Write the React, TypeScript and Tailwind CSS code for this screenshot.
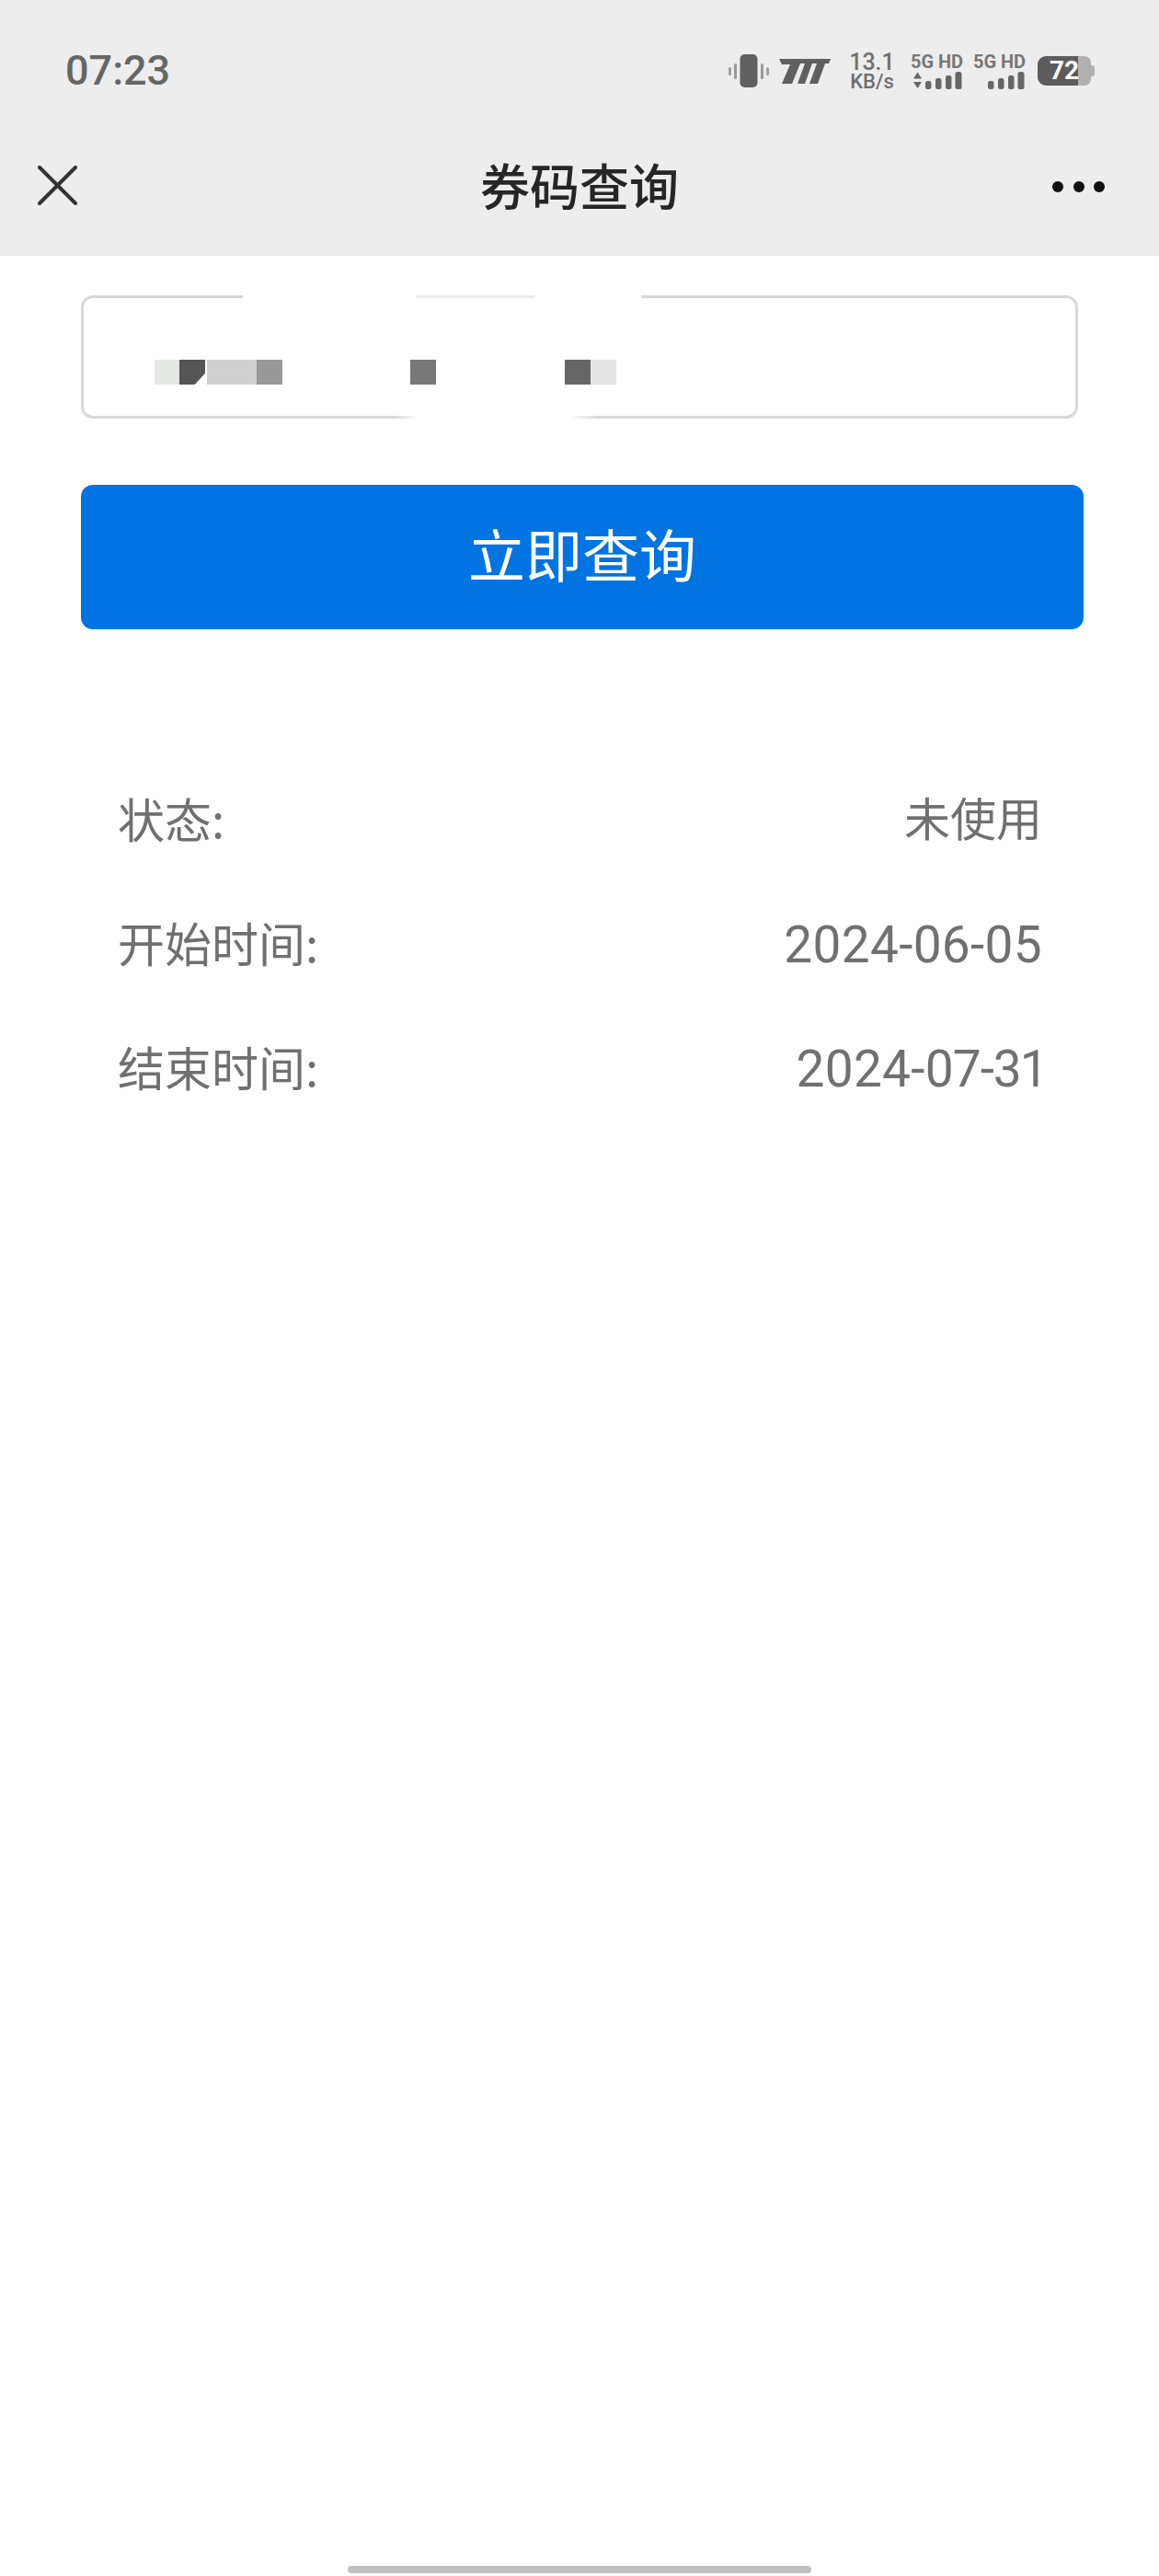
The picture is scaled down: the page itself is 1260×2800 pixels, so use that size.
import type { ReactNode } from "react";

const cjk = { fontFamily: '"Noto Sans CJK SC", "Noto Sans", sans-serif' };
const latin = { fontFamily: 'Roboto, "Noto Sans CJK SC", sans-serif' };

function Vibrate() {
  return (
    <svg width="44" height="36" viewBox="0 0 44 36" className="shrink-0" fill="#606060">
      <rect x="12.5" y="0" width="19" height="36" rx="5" />
      <rect x="0" y="14" width="3" height="9" rx="1.5" opacity="0.55" />
      <rect x="6" y="10" width="3" height="17" rx="1.5" opacity="0.6" />
      <rect x="35" y="10" width="3" height="17" rx="1.5" opacity="0.6" />
      <rect x="41" y="14" width="3" height="9" rx="1.5" opacity="0.55" />
    </svg>
  );
}

function SevenLogo() {
  return (
    <svg width="56" height="27" viewBox="0 0 56 27" className="shrink-0" fill="#606060">
      <path d="M0 0H56L54 5H50L42 27H33L41 5H36L28 27H20L28 5H23L14 27H3L12 6H3Z" />
    </svg>
  );
}

function Signal({ arrows }: { arrows: boolean }) {
  return (
    <svg width="57" height="19" viewBox="0 0 57 19" className="block" fill="#666666">
      {arrows && (
        <>
          <path d="M3 7.5L7.5 0.5L12 7.5Z" />
          <path d="M3 11L12 11L7.5 18Z" />
        </>
      )}
      <rect x="16" y="10" width="6.5" height="9" rx="2.5" />
      <rect x="27" y="7" width="6.5" height="12" rx="2.5" />
      <rect x="38" y="4" width="6.5" height="15" rx="2.5" />
      <rect x="48.5" y="0" width="7" height="19" rx="2.5" />
    </svg>
  );
}

function Sim({ arrows }: { arrows: boolean }) {
  return (
    <div className="flex w-[57px] shrink-0 flex-col" style={latin}>
      <div className="flex h-[20px] items-center justify-between text-[20px] leading-[20px] font-bold text-[#777777]">
        <span>5G</span>
        <span>HD</span>
      </div>
      <div className="mt-[1px]">
        <Signal arrows={arrows} />
      </div>
    </div>
  );
}

function Battery() {
  return (
    <div className="relative flex h-[32px] w-[62px] shrink-0" style={latin}>
      <div className="h-full w-[44px] rounded-l-[9px] bg-[#5c5c5c]" />
      <div className="h-full w-[14px] rounded-r-[7px] bg-[#b0b0b0]" />
      <div className="my-auto h-[12px] w-[4px] rounded-r-[3px] bg-[#b0b0b0]" />
      <span className="absolute top-0 left-[13px] text-[28px] leading-[32px] font-bold text-white">72</span>
    </div>
  );
}

function Row({ label, children, date }: { label: string; children: ReactNode; date: boolean }) {
  return (
    <div className="flex h-[135px] items-center justify-between text-[#707070]">
      <span className="pb-[6px] text-[51px] leading-[60px]" style={cjk}>{label}</span>
      {date ? (
        <span className="text-[55px] leading-[60px] tracking-[0.3px]" style={latin}>{children}</span>
      ) : (
        <span className="pb-[9px] text-[50px] leading-[60px]" style={cjk}>{children}</span>
      )}
    </div>
  );
}

export default function App() {
  return (
    <div className="flex min-h-[2800px] w-[1260px] flex-col bg-white" style={cjk}>
      <div className="flex h-[278px] shrink-0 flex-col bg-[#ededed]">
        <div className="flex h-[128px] items-center pt-[26px] pr-[70px] pl-[71px]">
          <span className="text-[45px] leading-[54px] font-medium text-[#666666]" style={latin}>07:23</span>
          <div className="ml-auto flex items-center">
            <Vibrate />
            <div className="ml-[11px]"><SevenLogo /></div>
            <div className="ml-[20px] flex w-[50px] shrink-0 flex-col items-center text-[#707070]" style={latin}>
              <span className="text-[25px] leading-[24px] font-medium">13.1</span>
              <span className="text-[22px] leading-[18px] font-medium">KB/s</span>
            </div>
            <div className="ml-[17px]"><Sim arrows={true} /></div>
            <div className="ml-[11px]"><Sim arrows={false} /></div>
            <div className="ml-[13px]"><Battery /></div>
          </div>
        </div>
        <div className="relative flex h-[150px] items-center justify-between pr-[59px] pl-[41px]">
          <svg width="43" height="43" viewBox="0 0 43 43" fill="none" stroke="#333333" strokeWidth="4" strokeLinecap="round" className="mb-[3px]">
            <path d="M2 2L41 41M41 2L2 41" />
          </svg>
          <span className="absolute left-[522px] pb-[4px] text-[54px] leading-[64px] font-medium text-[#262626]">券码查询</span>
          <div className="flex gap-[10.5px]">
            <div className="h-[12px] w-[12px] rounded-full bg-[#111111]" />
            <div className="h-[12px] w-[12px] rounded-full bg-[#111111]" />
            <div className="h-[12px] w-[12px] rounded-full bg-[#111111]" />
          </div>
        </div>
      </div>

      <div className="pt-[43px] pr-[81px] pl-[88px]">
        <div className="relative mr-[7px] flex h-[134px] items-center rounded-[13px] border-[3px] border-[#d8d8d8] pt-[33px] pl-[77px]">
          {/* retouched strips over the border */}
          <div className="absolute top-[-6px] left-[173px] h-[14px] w-[433px] bg-white" />
          <div className="absolute top-[-3px] left-[361px] h-[3px] w-[130px] rounded-b-full bg-[#ececec]" />
          <div className="absolute bottom-[-6px] left-[239px] h-[12px] w-[330px] bg-[linear-gradient(90deg,transparent_30%,#ffffff_38%,#ffffff_88%,transparent_97%)]" />
          <div className="relative flex h-[27px]">
            <div className="h-full w-[27px] bg-[#e6e8e6]" />
            <div className="h-full w-[28px] bg-[#555555] [clip-path:polygon(0_0,100%_0,100%_55%,60%_100%,0_100%)]" />
            <div className="ml-[2px] h-full w-[54px] bg-[#d0d0d0]" />
            <div className="h-full w-[28px] bg-[#999999]" />
            <div className="ml-[139px] h-full w-[28px] bg-[#777777]" />
            <div className="ml-[140px] h-full w-[28px] bg-[#666666]" />
            <div className="h-full w-[28px] bg-[#e3e3e3]" />
          </div>
        </div>

        <button className="mt-[72px] flex h-[157px] w-[1090px] items-center justify-center rounded-[13px] bg-[#0074e2] pb-[10px] text-[62px] leading-[72px] text-white">
          立即查询
        </button>

        <div className="mt-[140px] pr-[46px] pl-[40px]">
          <Row label="状态:" date={false}>未使用</Row>
          <Row label="开始时间:" date={true}>2024-06-05</Row>
          <Row label="结束时间:" date={true}>
            <span className="mr-[-7px] inline-block">
              2024-<span className="tracking-[-1px]">07-</span><span className="tracking-[-2px]">3</span>1
            </span>
          </Row>
        </div>
      </div>

      <div className="mt-auto flex justify-center pb-[3px]">
        <div className="h-[8px] w-[504px] rounded-full bg-[#c0c0c0]" />
      </div>
    </div>
  );
}
